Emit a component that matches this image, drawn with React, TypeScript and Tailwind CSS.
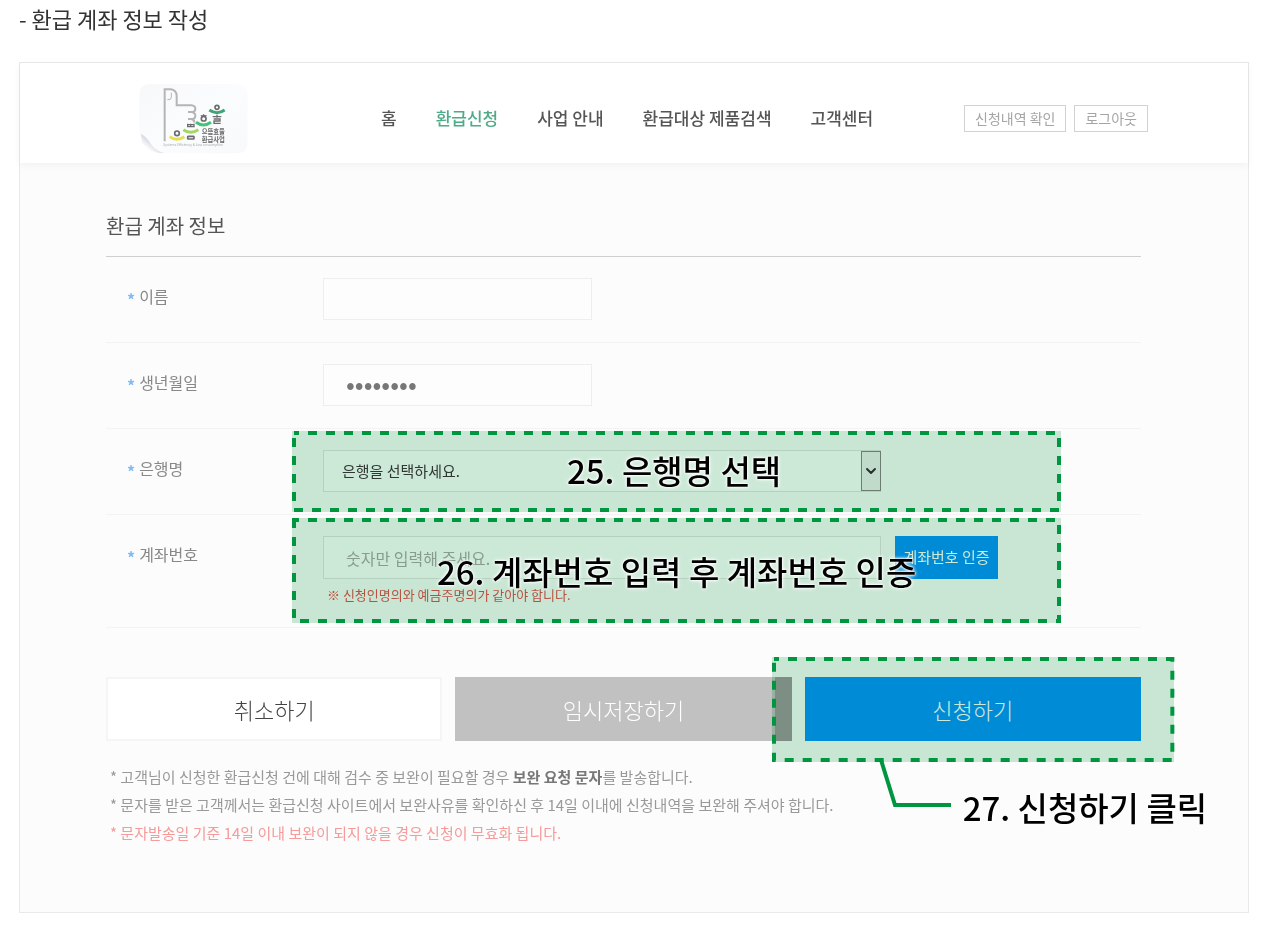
import React from "react";
import { ChevronDown } from "lucide-react";

const NAV_ITEMS = [
  { label: "홈", active: false },
  { label: "환급신청", active: true },
  { label: "사업 안내", active: false },
  { label: "환급대상 제품검색", active: false },
  { label: "고객센터", active: false },
];

const Logo: React.FC = () => (
  <svg
    viewBox="27 24 327 213"
    className="h-[71px] w-[109px] shrink-0"
    role="img"
    aria-label="으뜸효율 환급사업"
  >
    <defs>
      <linearGradient id="paper" x1="0" y1="0" x2="1" y2="1">
        <stop offset="0" stopColor="#f7f8fa" />
        <stop offset="0.5" stopColor="#fbfcfd" />
        <stop offset="1" stopColor="#f7f9fb" />
      </linearGradient>
      <linearGradient id="curl" x1="0" y1="1" x2="1" y2="0">
        <stop offset="0.25" stopColor="#ffffff" />
        <stop offset="0.52" stopColor="#d6d7e2" />
        <stop offset="0.75" stopColor="#fafbfd" />
      </linearGradient>
    </defs>
    <path
      d="M60 27H320Q353 27 353 60V202Q353 235 320 235H105Q75 232 58 205Q48 190 33 180L28 172V58Q30 27 60 27Z"
      fill="url(#paper)"
    />
    <path d="M32 176Q50 185 62 206Q78 228 104 235Q58 234 38 212Z" fill="url(#curl)" />
    {/* thumbs-up outline */}
    <g fill="none" stroke="#b5b5b5" strokeWidth="6">
      <path d="M104 199V43H122Q139 45 140 62V91H184Q196 93 196 101Q196 111 184 111H174M184 111Q196 113 196 122Q196 132 184 132H174M184 132Q194 134 193 143" />
      <path d="M124 53V66Q124 76 112 74" strokeWidth="3" />
    </g>
    <g fill="none" strokeWidth="9">
      <path d="M119 185Q140 201 163 185" stroke="#e3e253" />
      <path d="M160 164Q182 179 205 164" stroke="#a5d565" />
      <path d="M198 142Q220 158 243 142" stroke="#45c37d" />
      <path d="M238 105Q261 121 284 105" stroke="#3fa577" />
    </g>
    <g fill="none" stroke="#6c6c6c" strokeWidth="5">
      <circle cx="141" cy="175" r="7" />
      <circle cx="221" cy="131" r="7" />
      <path d="M212 122H230M221 117V124" strokeWidth="3" />
      <circle cx="261" cy="97" r="6" />
      <path d="M171 149H193M171 155H193M173 146V157M182 146V157M192 146V157" strokeWidth="4" />
      <rect x="173" y="184" width="19" height="8" rx="2" />
      <path d="M248 125H274M261 119V128M251 132H270V138H252V145H272" strokeWidth="4" />
    </g>
    <g fill="#666666" fontFamily="Noto Sans CJK KR, sans-serif">
      <text x="215" y="178" fontSize="19" fontWeight="700">으뜸효율</text>
      <text x="215" y="201" fontSize="19" fontWeight="700">환급사업</text>
      <text x="100" y="214" fontSize="10" fill="#aaaaaa">Systems Efficiency &amp; Low consumption</text>
    </g>
  </svg>
);

// Tinted area with a dashed green outline, placed over the parent it marks
const Highlight: React.FC<{ className: string }> = ({ className }) => (
  <div className={`pointer-events-none absolute ${className}`} aria-hidden="true">
    <div className="absolute inset-0 bg-[#cce9d7] mix-blend-multiply" />
    <div className="absolute inset-[2px]">
      <svg className="block h-full w-full overflow-visible">
        <rect
          width="100%"
          height="100%"
          fill="none"
          stroke="#009640"
          strokeWidth="4"
          strokeDasharray="9 9"
          strokeDashoffset="4"
        />
      </svg>
    </div>
  </div>
);

const Callout: React.FC<{ className: string; children: React.ReactNode }> = ({
  className,
  children,
}) => (
  <p
    className={`pointer-events-none absolute text-[33px] leading-[48px] font-medium whitespace-nowrap text-black [text-shadow:0_0_1px_#fff,0_0_2px_#fff,0_0_3px_#fff,0_0_4px_#fff] ${className}`}
  >
    {children}
  </p>
);

const FormRow: React.FC<{
  id: string;
  label: string;
  children: React.ReactNode;
}> = ({ id, label, children }) => (
  <div className="flex border-b border-[#f3f3f3] pt-[21px] pb-[22px]">
    <label
      htmlFor={id}
      className="flex w-[217px] shrink-0 gap-1 pl-[21px] text-base leading-9 text-[#888]"
    >
      <span className="font-bold leading-[42px] text-[#7cbcf8]">*</span>
      {label}
    </label>
    <div className="relative min-w-0 flex-1">{children}</div>
  </div>
);

const fieldClass =
  "block h-[42px] w-[269px] border border-[#eee] bg-[#fdfdfd] px-[22px] text-[#777] outline-none";

export default function App() {
  return (
    <main className="min-h-screen bg-white pr-[25px] pb-[29px] pl-[19px] font-['Noto_Sans_CJK_KR',sans-serif]">
      <h1 className="pt-0.5 pb-7 text-[22px] leading-8 font-normal text-[#333]">
        - 환급 계좌 정보 작성
      </h1>

      <div className="border border-[#e9e9e9] bg-[#fcfcfc] pb-[65px]">
        <header className="flex h-[100px] items-center bg-white pt-[10px] pr-[100px] pl-[119px] shadow-[0_2px_8px_rgba(0,0,0,0.05)]">
          <Logo />
          <nav className="ml-[133px] flex gap-[39px] text-[17px] leading-6 font-medium text-[#555]">
            {NAV_ITEMS.map((item) => (
              <a
                key={item.label}
                href="#"
                className={item.active ? "text-[#4fab87]" : undefined}
              >
                {item.label}
              </a>
            ))}
          </nav>
          <div className="ml-auto flex gap-2 text-sm text-[#a5a5a5]">
            <button type="button" className="h-[27px] border border-[#d2d2d2] px-[10px] leading-5">
              신청내역 확인
            </button>
            <button type="button" className="h-[27px] border border-[#d2d2d2] px-[10px] leading-5">
              로그아웃
            </button>
          </div>
        </header>

        <form className="pt-[47px] pr-[107px] pl-[86px]" onSubmit={(e) => e.preventDefault()}>
          <h2 className="border-b border-[#cfcfcf] pb-[14px] text-xl leading-8 font-normal text-[#555]">
            환급 계좌 정보
          </h2>

          <FormRow id="name" label="이름">
            <input id="name" type="text" className={`${fieldClass} text-base`} />
          </FormRow>

          <FormRow id="birth" label="생년월일">
            <input
              id="birth"
              type="password"
              defaultValue="19900101"
              className={`${fieldClass} pb-1.5 text-[26px]`}
            />
          </FormRow>

          <FormRow id="bank" label="은행명">
            <div className="relative w-[558px]">
              <select
                id="bank"
                className="block h-[42px] w-full appearance-none border border-[#e4e4e4] bg-white px-[18px] text-[15px] text-[#3c3c3c] outline-none"
              >
                <option>은행을 선택하세요.</option>
              </select>
              <span className="pointer-events-none absolute top-px right-0 flex h-10 w-5 items-center justify-center border border-[#888] bg-[#f0f0f0]">
                <ChevronDown className="h-4 w-4 text-[#333]" strokeWidth={3} />
              </span>
            </div>
            <Highlight className="-top-[19px] right-[80px] -bottom-[20px] -left-[31px]" />
            <Callout className="-top-1 left-[244px]">25. 은행명 선택</Callout>
          </FormRow>

          <FormRow id="account" label="계좌번호">
            <div className="flex gap-[14px]">
              <input
                id="account"
                type="text"
                placeholder="숫자만 입력해 주세요."
                className="block h-[43px] w-[558px] border border-[#e4e4e4] bg-white px-[22px] text-base outline-none placeholder:text-[#aaa]"
              />
              <button
                type="button"
                className="h-[43px] w-[103px] bg-[#0098ff] text-[15px] text-white"
              >
                계좌번호 인증
              </button>
            </div>
            <p className="pt-1.5 pl-1 text-[13px] leading-5 text-[#e45a4c]">
              ※ 신청인명의와 예금주명의가 같아야 합니다.
            </p>
            <Highlight className="-top-[18px] right-[80px] -bottom-[18px] -left-[31px]" />
            <Callout className="top-[11px] left-[114px]">26. 계좌번호 입력 후 계좌번호 인증</Callout>
          </FormRow>

          <div className="grid grid-cols-3 gap-[13px] pt-[49px] text-[22px] font-light">
            <button type="button" className="h-16 border-2 border-[#f5f5f5] bg-white text-[#444]">
              취소하기
            </button>
            <button
              type="button"
              className="h-16 bg-[linear-gradient(to_right,#c1c1c1_calc(100%-17px),#9c9c9c_0)] text-white"
            >
              임시저장하기
            </button>
            <div className="relative">
              <button type="submit" className="h-16 w-full bg-[#0098ff] text-white">
                신청하기
              </button>
              <Highlight className="-top-[20px] -right-[33px] -bottom-[21px] -left-[33px]" />
              <svg
                className="absolute top-[83px] left-[72px] h-[48px] w-[74px]"
                viewBox="0 0 74 48"
                fill="none"
                stroke="#009640"
                strokeWidth="4"
                aria-hidden="true"
              >
                <path d="M4 0L18 45H74" />
              </svg>
              <Callout className="top-[106px] left-[158px]">27. 신청하기 클릭</Callout>
            </div>
          </div>

          <ul className="pt-[22px] pl-1 text-[15px] leading-7 text-[#999]">
            <li>
              * 고객님이 신청한 환급신청 건에 대해 검수 중 보완이 필요할 경우{" "}
              <strong className="font-bold text-[#777]">보완 요청 문자</strong>를 발송합니다.
            </li>
            <li>
              * 문자를 받은 고객께서는 환급신청 사이트에서 보완사유를 확인하신 후 14일 이내에
              신청내역을 보완해 주셔야 합니다.
            </li>
            <li className="text-[#f79a9a]">
              * 문자발송일 기준 14일 이내 보완이 되지 않을 경우 신청이 무효화 됩니다.
            </li>
          </ul>
        </form>
      </div>
    </main>
  );
}
